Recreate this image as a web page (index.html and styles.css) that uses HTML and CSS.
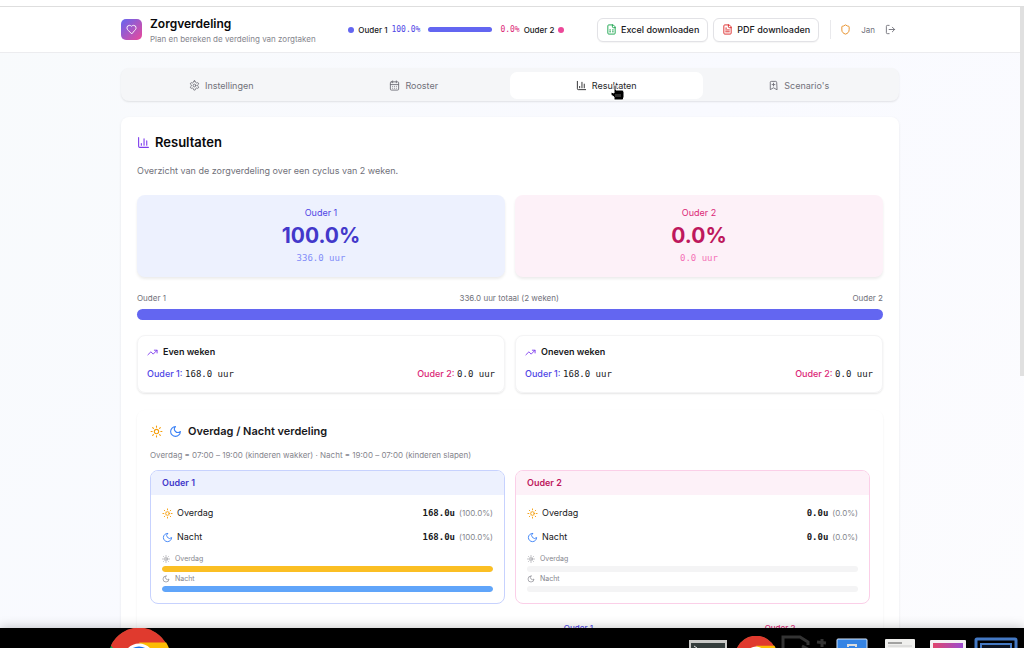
FILE: index.html
```html
<!DOCTYPE html>
<html lang="nl">
<head>
<meta charset="utf-8">
<title>Zorgverdeling</title>
<link rel="stylesheet" href="styles.css">
</head>
<body>
<svg class="defs" aria-hidden="true">
  <symbol id="heart" viewBox="0 0 24 24"><path d="M19 14c1.5-1.5 3-3.200 3-5.500A5.500 5.500 0 0 0 16.500 3c-1.800 0-3 .5-4.500 2-1.500-1.500-2.700-2-4.500-2A5.500 5.500 0 0 0 2 8.500c0 2.300 1.500 4 3 5.500l7 7z"/></symbol>
  <symbol id="gear" viewBox="0 0 24 24"><path d="M12.220 2h-.44a2 2 0 0 0-2 2v.18a2 2 0 0 1-1 1.730l-.43.25a2 2 0 0 1-2 0l-.15-.08a2 2 0 0 0-2.730.73l-.22.38a2 2 0 0 0 .73 2.730l.15.1a2 2 0 0 1 1 1.720v.51a2 2 0 0 1-1 1.740l-.15.09a2 2 0 0 0-.73 2.730l.22.38a2 2 0 0 0 2.730.73l.15-.08a2 2 0 0 1 2 0l.43.25a2 2 0 0 1 1 1.730V20a2 2 0 0 0 2 2h.44a2 2 0 0 0 2-2v-.18a2 2 0 0 1 1-1.730l.43-.25a2 2 0 0 1 2 0l.15.08a2 2 0 0 0 2.730-.73l.22-.39a2 2 0 0 0-.73-2.730l-.15-.08a2 2 0 0 1-1-1.740v-.5a2 2 0 0 1 1-1.740l.15-.09a2 2 0 0 0 .73-2.730l-.22-.38a2 2 0 0 0-2.730-.73l-.15.08a2 2 0 0 1-2 0l-.43-.25a2 2 0 0 1-1-1.730V4a2 2 0 0 0-2-2z"/><circle cx="12" cy="12" r="3"/></symbol>
  <symbol id="calendar" viewBox="0 0 24 24"><path d="M8 2v4M16 2v4M3 10h18M8 14h.01M12 14h.01M16 14h.01M8 18h.01M12 18h.01M16 18h.01"/><rect x="3" y="4" width="18" height="18" rx="2"/></symbol>
  <symbol id="chart" viewBox="0 0 24 24"><path d="M3 3v16a2 2 0 0 0 2 2h16M18 17V9M13 17V5M8 17v-3"/></symbol>
  <symbol id="bookmark" viewBox="0 0 24 24"><path d="M19 21l-7-4-7 4V5a2 2 0 0 1 2-2h10a2 2 0 0 1 2 2zM12 7v6M9 10h6"/></symbol>
  <symbol id="sheet" viewBox="0 0 24 24"><path d="M15 2H6a2 2 0 0 0-2 2v16a2 2 0 0 0 2 2h12a2 2 0 0 0 2-2V7zM14 2v4a2 2 0 0 0 2 2h4M8 13h2M14 13h2M8 17h2M14 17h2"/></symbol>
  <symbol id="file" viewBox="0 0 24 24"><path d="M15 2H6a2 2 0 0 0-2 2v16a2 2 0 0 0 2 2h12a2 2 0 0 0 2-2V7zM14 2v4a2 2 0 0 0 2 2h4M10 9H8M16 13H8M16 17H8"/></symbol>
  <symbol id="shield" viewBox="0 0 24 24"><path d="M20 13c0 5-3.500 7.500-7.660 8.950a1 1 0 0 1-.67-.01C7.500 20.500 4 18 4 13V6a1 1 0 0 1 1-1c2 0 4.500-1.200 6.240-2.720a1.170 1.170 0 0 1 1.520 0C14.510 3.810 17 5 19 5a1 1 0 0 1 1 1z"/></symbol>
  <symbol id="logout" viewBox="0 0 24 24"><path d="M9 21H5a2 2 0 0 1-2-2V5a2 2 0 0 1 2-2h4M16 17l5-5-5-5M21 12H9"/></symbol>
  <symbol id="trend" viewBox="0 0 24 24"><path d="M22 7l-8.500 8.500-5-5L2 17M16 7h6v6"/></symbol>
  <symbol id="sun" viewBox="0 0 24 24"><circle cx="12" cy="12" r="4"/><path d="M12 2v2M12 20v2M4.930 4.930l1.410 1.410M17.660 17.660l1.410 1.410M2 12h2M20 12h2M6.340 17.660l-1.410 1.410M19.070 4.930l-1.410 1.410"/></symbol>
  <symbol id="moon" viewBox="0 0 24 24"><path d="M12 3a6 6 0 0 0 9 9 9 9 0 1 1-9-9z"/></symbol>
  <symbol id="chrome" viewBox="0 0 64 64"><circle cx="32" cy="32" r="32" fill="#1e9e4a"/><path d="M3 18A32 32 0 0 1 61 18H32A14 14 0 0 0 19 38z" fill="#e03a2e"/><path d="M32 15h28A32 32 0 0 1 30 64l15-25z" fill="#fbbc05"/><circle cx="32" cy="32" r="16" fill="#fff"/><circle cx="32" cy="32" r="13" fill="#1a73e8"/></symbol>
</svg>

<div class="view">
  <header class="topbar">
    <div class="wrap topbar-in">
      <div class="brand">
        <span class="logo"><svg class="icon s11"><use href="#heart"/></svg></span>
        <div>
          <h1>Zorgverdeling</h1>
          <p>Plan en bereken de verdeling van zorgtaken</p>
        </div>
      </div>
      <div class="split">
        <i class="dot indigo-bg"></i><span>Ouder 1</span><span class="mono indigo">100.0%</span>
        <i class="split-bar"></i>
        <span class="mono pink">0.0%</span><span>Ouder 2</span><i class="dot pink-bg"></i>
      </div>
      <div class="actions">
        <button class="btn" type="button"><svg class="icon s11 green"><use href="#sheet"/></svg>Excel downloaden</button>
        <button class="btn" type="button"><svg class="icon s11 red"><use href="#file"/></svg>PDF downloaden</button>
        <div class="user">
          <svg class="icon s11 orange"><use href="#shield"/></svg>
          <span>Jan</span>
          <button class="plain" type="button" aria-label="Uitloggen"><svg class="icon s11"><use href="#logout"/></svg></button>
        </div>
      </div>
    </div>
  </header>

  <main class="wrap">
    <nav class="tabs">
      <button type="button"><svg class="icon s11"><use href="#gear"/></svg>Instellingen</button>
      <button type="button"><svg class="icon s11"><use href="#calendar"/></svg>Rooster</button>
      <button type="button" class="active"><svg class="icon s11"><use href="#chart"/></svg>Resultaten
        <svg class="pointer" viewBox="0 0 15 17"><path d="M4 1h2v5h7l1 2v5l-1 3H4v-3L1 11V8l3 1z" fill="#000" stroke="#fff"/><path d="M6 10v3M8 10v3M10 10v3" stroke="#999" stroke-width=".6"/></svg>
      </button>
      <button type="button"><svg class="icon s11"><use href="#bookmark"/></svg>Scenario's</button>
    </nav>

    <section class="panel">
      <h2><svg class="icon s13 violet"><use href="#chart"/></svg>Resultaten</h2>
      <p class="lead">Overzicht van de zorgverdeling over een cyclus van 2 weken.</p>

      <div class="pair">
        <div class="tile tile-a"><span>Ouder 1</span><strong>100.0%</strong><span class="mono">336.0 uur</span></div>
        <div class="tile tile-b"><span>Ouder 2</span><strong>0.0%</strong><span class="mono">0.0 uur</span></div>
      </div>

      <div class="legend"><span>Ouder 1</span><span>336.0 uur totaal (2 weken)</span><span>Ouder 2</span></div>
      <div class="total"></div>

      <div class="pair">
        <div class="week">
          <h3><svg class="icon s11 violet"><use href="#trend"/></svg>Even weken</h3>
          <div class="row"><span><b class="indigo">Ouder 1:</b> <span class="mono">168.0 uur</span></span><span><b class="pink">Ouder 2:</b> <span class="mono">0.0 uur</span></span></div>
        </div>
        <div class="week">
          <h3><svg class="icon s11 violet"><use href="#trend"/></svg>Oneven weken</h3>
          <div class="row"><span><b class="indigo">Ouder 1:</b> <span class="mono">168.0 uur</span></span><span><b class="pink">Ouder 2:</b> <span class="mono">0.0 uur</span></span></div>
        </div>
      </div>

      <section class="daynight">
        <h3 class="dn-title"><svg class="icon s13 amber"><use href="#sun"/></svg><svg class="icon s13 blue"><use href="#moon"/></svg>Overdag / Nacht verdeling</h3>
        <p class="note">Overdag = 07:00 – 19:00 (kinderen wakker) · Nacht = 19:00 – 07:00 (kinderen slapen)</p>
        <div class="pair">
          <article class="parent parent-a">
            <h4>Ouder 1</h4>
            <div class="parent-body">
              <div class="line"><svg class="icon s11 amber"><use href="#sun"/></svg><span>Overdag</span><b class="mono">168.0u</b><small>(100.0%)</small></div>
              <div class="line"><svg class="icon s11 blue"><use href="#moon"/></svg><span>Nacht</span><b class="mono">168.0u</b><small>(100.0%)</small></div>
              <div class="cap"><svg class="icon s8"><use href="#sun"/></svg>Overdag</div>
              <div class="track"><div class="fill amber-bg" style="width:100%"></div></div>
              <div class="cap"><svg class="icon s8"><use href="#moon"/></svg>Nacht</div>
              <div class="track"><div class="fill blue-bg" style="width:100%"></div></div>
            </div>
          </article>
          <article class="parent parent-b">
            <h4>Ouder 2</h4>
            <div class="parent-body">
              <div class="line"><svg class="icon s11 amber"><use href="#sun"/></svg><span>Overdag</span><b class="mono">0.0u</b><small>(0.0%)</small></div>
              <div class="line"><svg class="icon s11 blue"><use href="#moon"/></svg><span>Nacht</span><b class="mono">0.0u</b><small>(0.0%)</small></div>
              <div class="cap"><svg class="icon s8"><use href="#sun"/></svg>Overdag</div>
              <div class="track"><div class="fill amber-bg" style="width:0%"></div></div>
              <div class="cap"><svg class="icon s8"><use href="#moon"/></svg>Nacht</div>
              <div class="track"><div class="fill blue-bg" style="width:0%"></div></div>
            </div>
          </article>
        </div>
        <table class="detail">
          <thead><tr><td></td><th class="indigo" scope="col">Ouder 1</th><th class="pink" scope="col">Ouder 2</th></tr></thead>
        </table>
      </section>
    </section>
  </main>
  <div class="scroll"></div>
</div>

<footer class="dock">
  <svg class="dock-main" viewBox="0 0 62 20"><svg width="62" height="62"><use href="#chrome"/></svg></svg>
  <svg class="dock-apps" viewBox="0 0 336 20">
    <defs><linearGradient id="media"><stop stop-color="#e0446c"/><stop offset="1" stop-color="#9b4bd0"/></linearGradient></defs>
    <rect x="6" y="12" width="38" height="26" fill="#c9c9c7"/><rect x="8" y="15" width="34" height="20" fill="#343d3c"/><path d="M11 18l3 2" stroke="#ddd"/>
    <svg x="52" y="8" width="42" height="42"><use href="#chrome"/></svg>
    <path d="M100 20V9h17l8 5v3" fill="none" stroke="#333" stroke-width="3"/><path d="M119 18l6 3M134 14l9 1M139 11v8" stroke="#333" stroke-width="3"/>
    <rect x="154" y="11" width="30" height="24" rx="1" fill="#3584e4" stroke="#d5e5fa"/><path d="M165 19v-2h8v2" fill="none" stroke="#ddd" stroke-width="2"/>
    <rect x="202" y="11" width="30" height="24" rx="1" fill="#efefed"/><path d="M205 15h14" stroke="#555"/><path d="M205 18h24" stroke="#ccc"/>
    <rect x="247" y="12" width="36" height="24" rx="1" fill="#f3eff2"/><rect x="250" y="15" width="30" height="20" fill="url(#media)"/>
    <rect x="293" y="11" width="40" height="30" rx="1" fill="none" stroke="#4479c4" stroke-width="3"/><rect x="298" y="16" width="30" height="20" fill="#0c1525" stroke="#4479c4" stroke-width="2"/>
  </svg>
</footer>
</body>
</html>
```
FILE: styles.css
```css
* { box-sizing: border-box; }
body {
  margin: 0; height: 100vh; overflow: hidden; display: flex; flex-direction: column;
  font: 9px/14px Inter, "Liberation Sans", sans-serif; color: #18181b; background: #fff;
}
h1, h2, h3, h4, p { margin: 0; }
button { font: inherit; color: inherit; border: 0; background: none; padding: 0; }
.defs { position: absolute; width: 0; height: 0; }
.mono { font-family: "DejaVu Sans Mono", monospace; }
.icon { flex: none; fill: none; stroke: currentColor; stroke-width: 2; stroke-linecap: round; stroke-linejoin: round; }
.s8 { width: 8px; height: 8px; }
.s11 { width: 11px; height: 11px; }
.s13 { width: 13px; height: 13px; }
.indigo { color: #4f46e5; }
.pink { color: #db2777; }
.green { color: #16a34a; }
.red { color: #dc2626; }
.orange { color: #e68a1e; }
.violet { color: #7c3aed; }
.amber { color: #f59e0b; }
.blue { color: #3b82f6; }
.indigo-bg { background: #6366f1; }
.pink-bg { background: #ec4899; }
.amber-bg { background: #fbbf24; }
.blue-bg { background: #60a5fa; }

.view {
  flex: 1; min-height: 0; overflow: hidden; position: relative; margin-top: 6px; padding-right: 4px;
  border-top: 1px solid #dedede; background: linear-gradient(135deg, #f8fafc, #f9faff 50%, #fcfcfe);
}
.scroll { position: absolute; top: 0; right: 0; width: 4px; height: 59.5%; background: #e0e0e0; }
.wrap { width: 100%; max-width: 778px; margin: 0 auto; }

.topbar { background: #fff; border-bottom: 1px solid #ececef; }
.topbar-in { display: flex; justify-content: space-between; align-items: center; height: 45px; }
.brand { display: flex; align-items: center; gap: 8px; }
.logo {
  display: grid; place-items: center; width: 21px; height: 21px; border-radius: 5px;
  color: #fff; background: linear-gradient(135deg, #6366f1, #ec4899);
}
.brand h1 { font-size: 12px; line-height: 18px; font-weight: 600; color: #09090b; }
.brand p { font-size: 8px; line-height: 12px; color: #85858d; }
.split { display: flex; align-items: center; gap: 4px; font-size: 8px; font-weight: 500; }
.split .mono { font-weight: 400; }
.dot { width: 6px; height: 6px; border-radius: 50%; }
.split-bar { width: 64px; height: 5px; margin: 0 4px; border-radius: 3px; background: #6366f1; }
.actions { display: flex; align-items: center; gap: 5px; }
.btn {
  display: flex; align-items: center; gap: 4px; height: 24px; padding: 0 8px;
  font-weight: 500; background: #fff; border: 1px solid #e2e2e6; border-radius: 6px;
  box-shadow: 0 1px 1px #0000000a;
}
.user {
  display: flex; align-items: center; gap: 10px; height: 19px; margin-left: 6px; padding: 0 3px 0 9px;
  border-left: 1px solid #e9e9ec; font-size: 8px; color: #71717a;
}
.plain { display: flex; }

.tabs {
  display: grid; grid-template-columns: repeat(4, 1fr); margin-top: 15px; padding: 4px 4px 2px;
  border-radius: 8px; background: #f5f6f8; box-shadow: 0 1px 2px #0000001a;
}
.tabs button {
  position: relative; display: flex; justify-content: center; align-items: center; gap: 5px; height: 27px;
  color: #71717a; border-radius: 7px;
}
.tabs .active { background: #fff; color: #27272a; }
.pointer { position: absolute; left: 52%; top: 12px; width: 15px; height: 17px; }

.panel { margin-top: 16px; padding: 16px; border-radius: 8px; background: #fff; box-shadow: 0 1px 3px #00000014; }
.panel h2 { display: flex; align-items: center; gap: 5px; font-size: 13px; line-height: 18px; font-weight: 600; color: #09090b; }
.lead { margin: 13px 0 17px; color: #71717a; }
.pair { display: grid; grid-template-columns: 1fr 1fr; gap: 10px; }
.tile {
  display: flex; flex-direction: column; align-items: center; padding: 11px 11px 12px; border-radius: 8px;
  box-shadow: 0 2px 3px #00000014;
}
.tile strong { font-size: 21px; line-height: 31px; }
.tile-a { background: #edf1fe; color: #4f46e5; }
.tile-a strong { color: #4338ca; }
.tile-a .mono { color: #818cf8; }
.tile-b { background: #fdf1f8; color: #db2777; }
.tile-b strong { color: #be185d; }
.tile-b .mono { color: #f472b6; }
.legend { display: flex; justify-content: space-between; margin: 14px 0 4px; font-size: 8px; color: #71717a; }
.total { height: 11px; margin-bottom: 15px; border-radius: 6px; background: #6366f1; }
.week { padding: 9px 9px 11px; border: 1px solid #f4f4f5; border-radius: 8px; box-shadow: 0 1px 2px #0000001a; }
.week h3 { display: flex; align-items: center; gap: 5px; font-size: 9px; line-height: 14px; font-weight: 600; }
.row { display: flex; justify-content: space-between; margin-top: 8px; }
.row b { font-weight: 500; }

.daynight { margin-top: 17px; padding: 12px 13px; border-radius: 8px; box-shadow: 0 1px 2px #00000014; }
.dn-title { display: flex; align-items: center; gap: 6px; font-size: 11px; line-height: 18px; font-weight: 600; }
.note { margin: 8px 0 8px; font-size: 8px; color: #85858d; }
.parent { overflow: hidden; border: 1px solid #c7d2fe; border-radius: 8px; }
.parent h4 { padding: 5px 11px; font-size: 9px; font-weight: 600; }
.parent-a h4 { background: #edf1fe; color: #4338ca; }
.parent-b { border-color: #fbcfe8; }
.parent-b h4 { background: #fdf1f8; color: #be185d; }
.parent-body { padding: 11px 11px 11px; }
.line { display: flex; align-items: center; gap: 4px; margin-bottom: 10px; }
.line:nth-child(2) { margin-bottom: 8px; }
.line span { flex: 1; }
.line small { font-size: 8px; color: #85858d; }
.cap { display: flex; align-items: center; gap: 5px; font-size: 7px; color: #85858d; }
.track { height: 6px; border-radius: 3px; background: #f4f4f5; overflow: hidden; }
.fill { height: 100%; border-radius: 3px; }
.detail { width: 100%; margin-top: 17px; border-collapse: collapse; table-layout: fixed; font-size: 8px; }
.detail td { width: 44%; padding: 0; }
.detail th { padding: 0; font-weight: 500; }
.detail th:last-child { width: 25%; }

.dock {
  position: relative; display: flex; justify-content: space-between; height: 20px; padding: 0 5px 0 108px;
  background: #000; box-shadow: 0 0 12px #00000040;
}
.dock-main { width: 62px; height: 20px; overflow: hidden; }
.dock-apps { width: 336px; height: 20px; overflow: hidden; }
```
